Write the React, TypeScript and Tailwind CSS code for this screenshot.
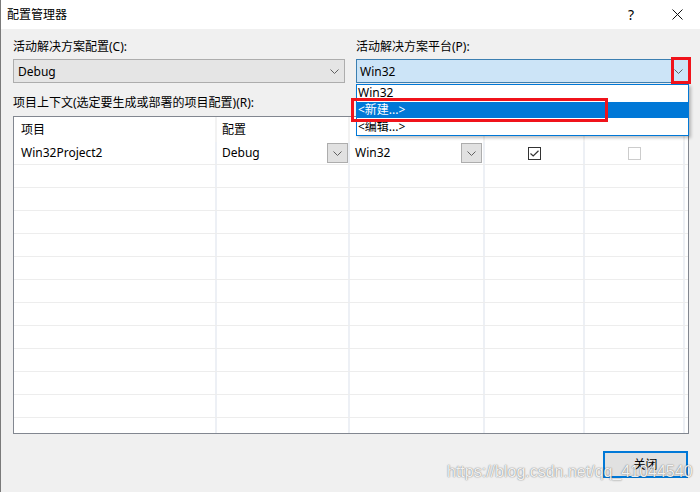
import React from "react";

const font = { fontFamily: '"Noto Sans", "Noto Sans CJK SC", sans-serif' };

function Chevron() {
  return (
    <svg width="9" height="5" viewBox="0 0 9 5" className="text-[#606060]">
      <path d="M0.5 0.5 L4.5 4.5 L8.5 0.5" fill="none" stroke="currentColor" strokeWidth="1" />
    </svg>
  );
}

function CellButton() {
  return (
    <div className="flex h-[20px] w-[21px] items-center justify-center border border-[#adadad] bg-[#e1e1e1]">
      <Chevron />
    </div>
  );
}

const cols = "grid grid-cols-[203px_133px_135px_100px_100px]";

export default function App() {
  const emptyRows = Array.from({ length: 12 });

  return (
    <div
      className="relative h-[492px] w-[700px] overflow-hidden border-l border-[#7a7a7a] bg-[#f0f0f0] text-[12px] leading-[16px] text-black"
      style={font}
    >
      {/* title bar */}
      <div className="flex h-[29px] items-center bg-white pl-[6px]">
        <span className="flex-1">配置管理器</span>
        <div className="flex h-full w-[46px] items-center justify-center text-[14px]">?</div>
        <div className="flex h-full w-[46px] items-center justify-center">
          <svg width="11" height="11" viewBox="0 0 11 11">
            <path d="M0.5 0.5 L10.5 10.5 M10.5 0.5 L0.5 10.5" stroke="#111" strokeWidth="1" />
          </svg>
        </div>
      </div>

      <div className="flex flex-col pl-[12px] pr-[11px] pt-[10px]">
        <div className="grid grid-cols-[332px_333px] gap-x-[11px]">
          <div>活动解决方案配置(C):</div>
          <div>活动解决方案平台(P):</div>
          <div className="mt-[4px] flex h-[24px] items-center justify-between border border-[#adadad] bg-[#e5e5e5] pl-[4px] pr-[5px]">
            <span className="pt-[1px]">Debug</span>
            <Chevron />
          </div>
          <div className="mt-[4px] flex h-[24px] items-center justify-between border border-[#3c7fb1] bg-[#cce4f7] pl-[3px] pr-[5px]">
            <span className="pt-[1px]">Win32</span>
            <Chevron />
          </div>
        </div>

        <div className="mt-[12px]">项目上下文(选定要生成或部署的项目配置)(R):</div>

        {/* grid */}
        <div className="mt-[5px] h-[318px] overflow-hidden border border-[#828790] bg-white">
          <div className={`${cols} h-[25px]`}>
            <div className="flex items-center border-r-2 border-[#f2f2f2] pl-[7px]">项目</div>
            <div className="flex items-center border-r-2 border-[#f2f2f2] pl-[5px]">配置</div>
            <div className="border-r-2 border-[#f2f2f2]" />
            <div className="border-r-2 border-[#f2f2f2]" />
            <div className="border-r-2 border-[#f2f2f2]" />
          </div>
          <div className={`${cols} h-[23px] border-b border-[#ededed]`}>
            <div className="flex items-center border-r-2 border-[#edf0f5] pl-[7px]">Win32Project2</div>
            <div className="flex items-center justify-between border-r-2 border-[#edf0f5] pl-[5px]">
              <span>Debug</span>
              <CellButton />
            </div>
            <div className="flex items-center justify-between border-r-2 border-[#edf0f5] pl-[5px] pr-[1px]">
              <span>Win32</span>
              <CellButton />
            </div>
            <div className="flex items-center justify-center border-r-2 border-[#edf0f5]">
              <div className="flex h-[13px] w-[13px] items-center justify-center border border-[#333]">
                <svg width="9" height="7" viewBox="0 0 9 7">
                  <path d="M0.5 3.5 L3.2 6 L8.5 0.8" fill="none" stroke="#333" strokeWidth="1.2" />
                </svg>
              </div>
            </div>
            <div className="flex items-center justify-center border-r-2 border-[#edf0f5]">
              <div className="h-[13px] w-[13px] border border-[#cccccc]" />
            </div>
          </div>
          {emptyRows.map((_, i) => (
            <div key={i} className={`${cols} h-[23px] border-b border-[#ededed]`}>
              <div className="border-r-2 border-[#edf0f5]" />
              <div className="border-r-2 border-[#edf0f5]" />
              <div className="border-r-2 border-[#edf0f5]" />
              <div className="border-r-2 border-[#edf0f5]" />
              <div className="border-r-2 border-[#edf0f5]" />
            </div>
          ))}
        </div>

        <div className="mt-[17px] flex justify-end pr-[1px]">
          <button className="flex h-[27px] w-[85px] items-center justify-center border-2 border-[#0078d7] bg-[#e1e1e1]">
            关闭
          </button>
        </div>
      </div>

      {/* open dropdown list */}
      <div className="absolute left-[355px] top-[84px] flex h-[52px] w-[333px] flex-col border border-[#0078d7] bg-white shadow-[2px_2px_3px_rgba(0,0,0,0.25)]">
        <div className="flex h-[17px] items-center pl-[1px]">Win32</div>
        <div className="flex h-[17px] items-center bg-[#0078d7] pl-[1px] text-white">&lt;新建...&gt;</div>
        <div className="flex h-[17px] items-center pl-[1px]">&lt;编辑...&gt;</div>
      </div>

      {/* red annotations */}
      <div className="absolute left-[350px] top-[98px] h-[24px] w-[257px] border-[3px] border-[#f0131b]" />
      <div className="absolute left-[670px] top-[57px] h-[27px] w-[20px] border-[3px] border-[#f0131b]" />

      {/* watermark */}
      <div
        className="pointer-events-none absolute left-[446px] top-[462px] text-[16px] leading-[20px] text-white/90 [text-shadow:0_0_1px_rgba(0,0,0,0.5),0_0_2px_rgba(0,0,0,0.25)]"
        style={{ fontFamily: '"Liberation Sans", Arial, sans-serif' }}
      >
        https://blog.csdn.net/qq_41044540
      </div>
    </div>
  );
}
